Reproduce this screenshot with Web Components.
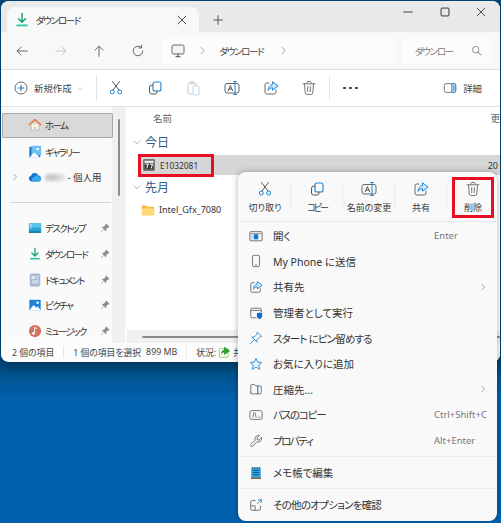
<!doctype html>
<html lang="ja"><head><meta charset="utf-8"><title>ダウンロード</title>
<style>
html,body{margin:0;height:100%;overflow:hidden}
body{width:501px;height:523px;position:relative;font:10px "Noto Sans","Noto Sans CJK JP",sans-serif;color:#3a3a3a;font-feature-settings:"palt";
background:linear-gradient(#00497f 361px,#00558f 375px,#0061ad 400px,#0062af 523px)}
</style></head><body>
<x-window>
  <x-titlebar slot="title"></x-titlebar>
  <x-navbar slot="nav"></x-navbar>
  <x-toolbar slot="tools"></x-toolbar>
  <x-sidebar slot="side">
    <x-nav-item icon="home" selected>ホーム</x-nav-item>
    <x-nav-item icon="gallery">ギャラリー</x-nav-item>
    <x-nav-item icon="cloud" chevron style="letter-spacing:0"><x-blur></x-blur> - 個人用</x-nav-item>
    <x-nav-sep></x-nav-sep>
    <x-nav-item icon="desktop" pinned>デスクトップ</x-nav-item>
    <x-nav-item icon="download" pinned>ダウンロード</x-nav-item>
    <x-nav-item icon="document" pinned>ドキュメント</x-nav-item>
    <x-nav-item icon="picture" pinned>ピクチャ</x-nav-item>
    <x-nav-item icon="music" pinned>ミュージック</x-nav-item>
  </x-sidebar>
  <x-filelist slot="files"></x-filelist>
  <x-statusbar slot="status"></x-statusbar>
</x-window>
<x-callout style="left:138px;top:154px;width:76px;height:23px"></x-callout>
<x-contextmenu>
  <x-menu-actions>
    <x-menu-action icon="cut">切り取り</x-menu-action>
    <x-menu-action icon="copy" style="letter-spacing:-2px">コピー</x-menu-action>
    <x-menu-action icon="rename">名前の変更</x-menu-action>
    <x-menu-action icon="share">共有</x-menu-action>
    <x-menu-action icon="trash" last>削除</x-menu-action>
  </x-menu-actions>
  <x-menu-item icon="open" hint="Enter">開く</x-menu-item>
  <x-menu-item icon="phone">My Phone に送信</x-menu-item>
  <x-menu-item icon="share" arrow>共有先</x-menu-item>
  <x-menu-item icon="admin">管理者として実行</x-menu-item>
  <x-menu-item icon="pin" style="--ls:-.85px">スタート にピン留めする</x-menu-item>
  <x-menu-item icon="star">お気に入りに追加</x-menu-item>
  <x-menu-item icon="zip" arrow>圧縮先...</x-menu-item>
  <x-menu-item icon="path" hint="Ctrl+Shift+C" style="--ls:-1.2px">パスのコピー</x-menu-item>
  <x-menu-item icon="wrench" hint="Alt+Enter" style="--ls:-1.5px">プロパティ</x-menu-item>
  <x-menu-sep></x-menu-sep>
  <x-menu-item icon="notepad">メモ帳で編集</x-menu-item>
  <x-menu-sep></x-menu-sep>
  <x-menu-item icon="more" style="--ls:-.75px">その他のオプションを確認</x-menu-item>
</x-contextmenu>
<x-callout style="left:452px;top:177px;width:42px;height:41px"></x-callout>
<script>
const G='#5a5a5a',B='#1c86d8';
const s=(d,c=G,w=1)=>`<path d="${d}" fill="none" stroke="${c}" stroke-width="${w}" stroke-linecap="round" stroke-linejoin="round"/>`;
const ICONS={
 download:s('M8 1.5V10M4.5 6.8 8 10.3l3.5-3.5','#16a37f',1.5)+'<rect x="2.5" y="12.5" width="11" height="1.8" fill="#2dc5a2"/>',
 back:s('M14 8H2.5M7 3.5 2.5 8 7 12.5','#555'),
 fwd:s('M2 8h11.5M9 3.5 13.5 8 9 12.5','#bdbdbd'),
 up:s('M8 14V2.5M3.5 7 8 2.5 12.5 7','#555'),
 refresh:s('M13.5 8A5.5 5.5 0 1 1 11.7 3.9M12 1.5v3H9','#555'),
 monitor:'<rect x="2" y="2" width="12" height="9" rx="1.6" fill="#f4f4f4" stroke="#666"/>'+s('M6 13.6h4M8 11v2.5','#666',1.2),
 plus:'<circle cx="8" cy="8" r="6" fill="none" stroke="#666"/>'+s('M8 5.2v5.6M5.2 8h5.6',B,1.2),
 cut:s('M5 10 11.5 1.5M11 10 4.5 1.5','#555')+`<circle cx="4.3" cy="12" r="2" fill="none" stroke="${B}"/><circle cx="11.7" cy="12" r="2" fill="none" stroke="${B}"/>`,
 copy:`<rect x="6" y="2" width="8" height="9" rx="2" fill="none" stroke="${B}" stroke-width="1.1"/>`+s('M6 5.2H4.5A2 2 0 0 0 2.5 7.2V12a2 2 0 0 0 2 2H8a2 2 0 0 0 2-2v-1','#555'),
 paste:'<rect x="3" y="3" width="8" height="11" rx="1.5" fill="none" stroke="#c9c9c9"/><rect x="5" y="1.6" width="4" height="2.4" rx=".8" fill="#eee" stroke="#c9c9c9"/><rect x="8" y="6" width="6" height="9" rx="1.2" fill="#fff" stroke="#b5d5ee"/>',
 rename:'<rect x="1" y="3.5" width="14" height="9.5" rx="2" fill="none" stroke="#666"/>'+s('M4.2 10.8 6.4 5.6l2.2 5.2M5.2 9h2.4','#555')+s('M11 1.5v13M9.6 1.5h2.8M9.6 14.5h2.8',B),
 share:s('M6 3H3.8A1.8 1.8 0 0 0 2 4.8v7.4A1.8 1.8 0 0 0 3.8 14h7.4a1.8 1.8 0 0 0 1.8-1.8V10','#666')+`<path d="M9.5 1.8 15 6l-5.5 4.2V7.8C7.5 7.8 6 8.6 5 10.5 5.2 7.5 7 4.6 9.5 4.4Z" fill="#d2e7f7" stroke="${B}" stroke-linejoin="round"/>`,
 trash:s('M2 3.8h12M6 3.6V2.5a1 1 0 0 1 1-1h2a1 1 0 0 1 1 1v1.1M3.5 3.8l.7 9a1.7 1.7 0 0 0 1.7 1.6h4.2a1.7 1.7 0 0 0 1.7-1.6l.7-9M6.7 6.6v5M9.3 6.6v5','#777'),
 details:'<rect x="1.5" y="3" width="13" height="10" rx="2" fill="none" stroke="#666"/><path d="M10 3h2.5a2 2 0 0 1 2 2v6a2 2 0 0 1-2 2H10Z" fill="#bcdcf4" stroke="#1c86d8"/>'+s('M11.8 6h1M11.8 8h1M11.8 10h1',B),
 search:'<circle cx="7" cy="7" r="4" fill="none" stroke="#777"/>'+s('M10 10l3.5 3.5','#777',1.2),
 home:'<path d="M3.5 7.5V14h9V7.5" fill="#fff3e4" stroke="#b9b3ac"/><path d="M1 8 8 1.8 15 8" fill="none" stroke="#e8763a" stroke-width="1.7" stroke-linejoin="round"/><rect x="6.5" y="10" width="3" height="4" fill="#d6d1cb"/>',
 gallery:'<rect x="1.5" y="2" width="12.5" height="12.5" rx="1" fill="#1a78c8"/><rect x="4" y="0.8" width="11" height="11" rx="1" fill="#6cc1f2"/><path d="M1.5 14.5 7 8.5l7 6Z" fill="#fff"/><circle cx="11" cy="4.5" r="1.4" fill="#fff"/>',
 cloud:'<path d="M4 13a3.2 3.2 0 0 1-.6-6.3A4.5 4.5 0 0 1 11.8 6a3.6 3.6 0 0 1 .6 7Z" fill="#0f74d1"/><path d="M6 13a2.3 2.3 0 0 1 .2-4.5 3.6 3.6 0 0 1 6.4-.8A2.8 2.8 0 0 1 13.5 13Z" fill="#36a8ee"/>',
 desktop:'<rect x="1" y="2.5" width="14" height="11" rx="1" fill="#29a3d6"/><rect x="1" y="2.5" width="14" height="5" fill="#5ec3e8"/><rect x="2.5" y="4" width="1.4" height="1.4" fill="#fff"/><rect x="2.5" y="7" width="1.4" height="1.4" fill="#fff"/><rect x="1" y="12" width="14" height="1.5" fill="#0e6f9e"/>',
 dl:s('M8 1.5V10M4.5 6.8 8 10.3l3.5-3.5','#16a37f',1.5)+'<rect x="2.5" y="12.5" width="11" height="1.8" fill="#2dc5a2"/>',
 document:'<rect x="2.5" y="1" width="11" height="14" rx="1.2" fill="#a9bdd6" stroke="#8aa0bc" stroke-width=".6"/><rect x="4.2" y="3.5" width="3.6" height="3.2" fill="#e8eef5"/><path d="M9 4h3M9 6h3M4.5 9h7.5M4.5 11h7.5" stroke="#e8eef5"/>',
 picture:'<rect x="1.5" y="2" width="13" height="12" rx="1" fill="#1e82d6"/><path d="M1.5 14 6.5 8l3 3 1.5-1.5L14.5 14Z" fill="#fff"/><circle cx="11" cy="5.4" r="1.4" fill="#fff"/>',
 music:'<circle cx="8" cy="8" r="7" fill="#d5745f"/><path d="M7.5 4v6.4" stroke="#fff" stroke-width="1"/><path d="M7.5 4l3 1.3" stroke="#fff" stroke-width="1.2"/><circle cx="6.2" cy="10.8" r="1.6" fill="#fff"/>',
 pin:s('M9.8 1.5 14.5 6.2 11.6 7.4 9 10.2 9.2 12.8 3.2 6.8 5.8 7 8.6 4.4ZM6 10 1.6 14.4',B),
 pinned:'<path d="M9.6 2.5 13.5 6.4 11.2 7.4 9 9.8 9.2 12 4 6.8 6.2 7 8.6 4.8ZM6 10 3 13" fill="#8c8c8c" stroke="#8c8c8c" stroke-linejoin="round"/>',
 archive:'<rect x="1.5" y="1.5" width="13" height="13" rx="1" fill="#555"/><rect x="2.8" y="3" width="10.4" height="10" fill="#e6e6e6"/><rect x="2.8" y="6" width="10.4" height="7" fill="#333"/><path d="M4 7.2h3l-1.6 4.6M9 7.2h3l-1.6 4.6" fill="none" stroke="#fff" stroke-width="1.2"/>',
 folder:'<path d="M1 3.8a1 1 0 0 1 1-1h4l1.4 1.4H14a1 1 0 0 1 1 1V13a1 1 0 0 1-1 1H2a1 1 0 0 1-1-1Z" fill="#f1b93f"/><rect x="1" y="6" width="14" height="8" rx="1" fill="#fcd877"/>',
 open:'<rect x="1" y="3" width="14" height="10.5" rx="1" fill="#f2f2f2" stroke="#666"/><path d="M1.5 5.2h13" stroke="#666" stroke-width=".7"/><rect x="5.5" y="6" width="5" height="5.8" fill="#0a78d4"/><rect x="2.5" y="6" width="2.4" height="5.8" fill="#bcd9f1"/>',
 phone:'<rect x="4" y="1.5" width="8" height="13" rx="1.6" fill="none" stroke="#666"/>'+s('M7 12.6h2','#666'),
 admin:s('M14 7V4a1.5 1.5 0 0 0-1.5-1.5h-9A1.5 1.5 0 0 0 2 4v8a1.5 1.5 0 0 0 1.5 1.5H8M2 5h12','#666')+'<path d="M9 8.2c1.5 0 2.3-.4 3-1 .7.6 1.5 1 3 1v3c0 2-1.4 3.3-3 3.8-1.6-.5-3-1.8-3-3.8Z" fill="#0a6fd1"/>',
 star:`<path d="M8 1.6 9.9 5.8 14.5 6.3 11.1 9.4 12 14 8 11.7 4 14 4.9 9.4 1.5 6.3 6.1 5.8Z" fill="#e8f3fc" stroke="${B}" stroke-linejoin="round"/>`,
 zip:s('M2 12.5V4a1 1 0 0 1 1-1h3.5L8 4.5h5a1 1 0 0 1 1 1v7a1 1 0 0 1-1 1H3a1 1 0 0 1-1-1Z','#666')+s('M10 4.5v9',B,1.4),
 path:'<rect x="1" y="3" width="14" height="10" rx="2" fill="none" stroke="#666"/>'+s('M5.5 5.5 4.5 10.5M7 5.5 8 10.5',B)+s('M10.5 10.5h.1M12.5 10.5h.1','#555'),
 wrench:s('M14.3 4.2 11.6 6.9 9.4 6.7 9.2 4.5 11.9 1.8A4 4 0 0 0 7 7L2 12a1.5 1.5 0 0 0 2.1 2.1L9.1 9a4 4 0 0 0 5.2-4.8Z','#666'),
 notepad:'<rect x="2.5" y="2" width="11" height="12.5" fill="#33a9e0"/><path d="M2.5 14h11" stroke="#8a5a2b" stroke-width="1.6"/><path d="M4.5 5h7M4.5 7.5h7M4.5 10h7" stroke="#0a4f75"/><path d="M4 1.2v2M6 1.2v2M8 1.2v2M10 1.2v2M12 1.2v2" stroke="#2b5d7d"/>',
 more:s('M7 3H3.5A1.5 1.5 0 0 0 2 4.5v8A1.5 1.5 0 0 0 3.5 14h8a1.5 1.5 0 0 0 1.5-1.5V9M2 9h5v5','#666')+s('M9.5 6.5 14 2M10.8 2H14v3.2',B),
 stshare:'<rect x="1.5" y="3" width="11" height="11" rx="1.5" fill="none" stroke="#7ccf5a"/><path d="M7.5 1 15 6l-7.5 5V8C5.5 8 4.5 9 3.5 11 3.5 7.5 5 5 7.5 4.5Z" fill="#2f9e2f"/>',
 chev:s('M6 3.5 10.5 8 6 12.5','#777'),
 chevd:s('M3 6l5 5 5-5','#7f8b97'),
 min:s('M3 8h10','#333'),
 max:'<rect x="3.5" y="3.5" width="9" height="9" rx="1" fill="none" stroke="#333" stroke-width="1.1"/>',
 close:s('M3.5 3.5l9 9M12.5 3.5l-9 9','#333'),
 add:s('M8 3v10M3 8h10','#444')
};
const svg=(n,sz=16)=>`<svg part="i" width="${sz}" height="${sz}" viewBox="0 0 16 16" style="flex:none;display:block">${ICONS[n]}</svg>`;
function def(name,css,html){
  customElements.define(name,class extends HTMLElement{
    constructor(){super();this.attachShadow({mode:'open'})}
    connectedCallback(){const h=typeof html==='function'?html(this):html;
      this.shadowRoot.innerHTML=`<style>${css}</style>${h}`;}
  });
}
const ibtn=`.b{width:38.6px;height:100%;display:flex;align-items:center;justify-content:center;flex:none}`;
const KANA='font-size:9.5px;letter-spacing:-1.3px';
def('x-window',`:host{display:grid;grid-template-columns:126px 1fr;grid-template-rows:31px 38px 37px 236px 18px;
  width:499px;height:361px;margin:1px 0 0 1px;background:#fbfbfb;border-radius:8px;overflow:hidden;box-shadow:0 4px 14px rgba(0,0,0,.35)}
  ::slotted([slot=title]),::slotted([slot=nav]),::slotted([slot=tools]),::slotted([slot=status]){grid-column:1/3}`,
  `<slot name="title"></slot><slot name="nav"></slot><slot name="tools"></slot><slot name="side"></slot><slot name="files"></slot><slot name="status"></slot>`);
def('x-titlebar',`:host{display:flex;background:#e9e9e9;padding-top:6px;box-sizing:border-box;padding-left:6px;color:#333}
 .tab{width:192px;background:#f8f8f8;border-radius:8px 8px 0 0;display:flex;align-items:center;padding:0 10px 0 7px;box-sizing:border-box;gap:6px}
 .t{flex:1;${KANA}}.add{width:37px;display:flex;align-items:center;justify-content:center}
 .sp{flex:1}.w{width:36.5px;display:flex;align-items:flex-start;justify-content:center;padding-top:4px;margin-top:-6px;height:24px}`,
 `<div class="tab">${svg('download')}<span class="t">ダウンロード</span>${svg('close',14)}</div><div class="add">${svg('add',14)}</div><div class="sp"></div>
  <div class="w">${svg('min',14)}</div><div class="w">${svg('max',14)}</div><div class="w" style="margin-right:.5px">${svg('close',14)}</div>`);
def('x-navbar',`:host{display:flex;align-items:center;background:#f8f8f8;border-bottom:1px solid #dcdcdc;box-sizing:border-box;padding:0 9px 0 2px;color:#444}
 ${ibtn} .a{flex:1;height:26px;margin-left:5px;background:#fcfcfc;border-radius:4px;display:flex;align-items:center;padding-left:8px;gap:11px}
 .k{${KANA};width:48px}.s{width:89px;height:26px;margin-left:6px;background:#fcfcfc;border-radius:4px;display:flex;align-items:center;padding:0 8px 0 13px;box-sizing:border-box;justify-content:space-between;color:#777}`,
 `<div class="b">${svg('back',14)}</div><div class="b">${svg('fwd',14)}</div><div class="b">${svg('up',14)}</div><div class="b">${svg('refresh',14)}</div>
 <div class="a">${svg('monitor')}${svg('chev',11)}<span class="k">ダウンロード</span>${svg('chev',11)}</div>
 <div class="s"><span class="k" style="width:auto">ダウンロー</span>${svg('search',13)}</div>`);
def('x-toolbar',`:host{display:flex;align-items:center;background:#fff;border-bottom:1px solid #e2e2e2;box-sizing:border-box;padding-left:12px;color:#444}
 ${ibtn} .n{display:flex;align-items:center;gap:5px;width:83px;flex:none;font-size:9.4px}
 .sep{width:1px;height:26px;background:#e6e6e6;flex:none}.d{display:flex;gap:3.5px;width:42px;justify-content:center;flex:none}
 .d i{width:2.4px;height:2.4px;border-radius:50%;background:#333}.sp{flex:1}.det{display:flex;align-items:center;gap:6px;padding-right:18px;font-size:9.4px}`,
 `<div class="n">${svg('plus')}<span>新規作成</span>${svg('chevd',7)}</div><div class="sep"></div>
 <div class="b">${svg('cut')}</div><div class="b">${svg('copy')}</div><div class="b">${svg('paste')}</div><div class="b">${svg('rename')}</div><div class="b">${svg('share')}</div><div class="b">${svg('trash')}</div>
 <div class="sep"></div><div class="d"><i></i><i></i><i></i></div><div class="sp"></div><div class="det">${svg('details',14)}<span>詳細</span></div>`);
def('x-sidebar',`:host{display:flex;flex-direction:column;padding:6.2px 14px 0 1px;box-sizing:border-box;position:relative;background:linear-gradient(90deg,#fafafa 111px,#f0f0f0 111px,#f0f0f0 124px,#fbfbfb 124px);overflow:hidden}
 .th{position:absolute;left:117px;top:12px;width:2px;height:77px;background:#8c8c8c;border-radius:1px}`,
 `<slot></slot><div class="th"></div>`);
def('x-nav-item',`:host{display:flex;align-items:center;height:25.6px;flex:none;position:relative;color:#333;font-size:9.5px;letter-spacing:-1.6px;box-sizing:border-box;padding-left:26px;gap:3px;white-space:nowrap}
 :host([selected]){background:#d9d9d9;box-shadow:inset 0 0 0 1px #a9a9a9;border-radius:2px;height:24.6px;margin-bottom:1px}
 .ch{position:absolute;left:8px}.pin{position:absolute;right:2px}`,
 h=>`${h.hasAttribute('chevron')?`<span class="ch">${svg('chev',10)}</span>`:''}${svg(h.getAttribute('icon')==='download'?'dl':h.getAttribute('icon'),14)}<span><slot></slot></span>${h.hasAttribute('pinned')?`<span class="pin">${svg('pinned',12)}</span>`:''}`);
def('x-nav-sep',`:host{display:flex;align-items:center;height:25.6px;flex:none;padding:0 2px 0 8px}div{height:1px;flex:1;background:#d4d4d4}`,`<div></div>`);
def('x-blur',`:host{display:inline-block;width:20px;height:9px;vertical-align:-1px;background:radial-gradient(ellipse at 35% 50%,#bdbdbd,#e8e8e8 70%,transparent);filter:blur(1px)}`,``);
def('x-filelist',`:host{display:flex;flex-direction:column;background:#fff;position:relative;overflow:hidden;color:#333}
 .h{height:22px;display:flex;align-items:center;padding-left:26px;justify-content:space-between;color:#666;flex:none;font-size:9.5px}
 .g{height:24px;display:flex;align-items:center;gap:3px;font-size:12px;color:#2f5c88;padding-left:5px;flex:none}
 .r{height:20px;display:flex;align-items:center;gap:4px;padding-left:14px;flex:none;position:relative;font-size:9px}
 .sel{background:#d6d6d6;margin-left:12px;padding-left:3px;font-size:8.4px}
 .date{position:absolute;right:2px;font-size:9px}
 .sb{margin-top:auto;height:13px;background:#f0f0f0;display:flex;align-items:center;padding-left:15px;flex:none}.sb i{display:block;width:100%;height:2px;background:#8c8c8c;border-radius:1px}`,
 `<div class="h"><span>名前</span><span>更</span></div>
 <div class="g" style="height:26px">${svg('chevd',10)}<span>今日</span></div>
 <div class="r sel">${svg('archive',14)}<span>E1032081</span><span class="date">20</span></div>
 <div class="g">${svg('chevd',10)}<span>先月</span></div>
 <div class="r" style="height:21px">${svg('folder',14)}<span>Intel_Gfx_7080</span></div>
 <div class="sb"><i></i></div>`);
def('x-statusbar',`:host{display:flex;align-items:center;background:#fcfcfc;padding-left:11px;color:#444;overflow:hidden;white-space:nowrap;font-size:8.8px}
 .s{width:1px;height:12px;background:#e8e8e8;margin:0 9px;flex:none}.u{margin-left:5px}.i{margin:0 2px 0 2px}`,
 `<span>2 個の項目</span><span class="s"></span><span>1 個の項目を選択</span><span class="u">899 MB</span><span class="s"></span><span>状況:</span><span class="i">${svg('stshare',13)}</span><span>共有</span>`);
def('x-callout',`:host{display:block;position:absolute;box-sizing:border-box;border:3px solid #e60f23;pointer-events:none}`,``);
def('x-contextmenu',`:host{position:absolute;left:238px;top:172px;width:259px;height:349px;background:#f9f9f9;border-radius:8px;box-shadow:0 0 6px rgba(0,0,0,.3);display:flex;flex-direction:column;box-sizing:border-box;padding-bottom:3px;font-size:10.5px;color:#333}`,`<slot></slot>`);
def('x-menu-actions',`:host{display:flex;height:50px;flex:none;padding:0 0 0 1px;border-bottom:1px solid #e8e8e8;box-sizing:border-box;margin-bottom:1px}`,`<slot></slot>`);
def('x-menu-action',`:host{width:52px;flex:none;display:flex;flex-direction:column;align-items:center;padding-top:9px;box-sizing:border-box;gap:4px;font-size:9px;position:relative;white-space:nowrap;color:#3a3a3a}
 .sep{position:absolute;right:0;top:10px;height:28px;width:1px;background:#ececec}`,
 h=>`${svg(h.getAttribute('icon'),16)}<span><slot></slot></span>${h.hasAttribute('last')?'':'<i class="sep"></i>'}`);
def('x-menu-item',`:host{display:flex;align-items:center;height:25.6px;flex:none;padding-left:11px;gap:10px;position:relative;white-space:nowrap}
 .t{letter-spacing:var(--ls,0)}.h{position:absolute;left:196px;font-size:9.5px;color:#777;letter-spacing:0}.a{position:absolute;left:240px}`,
 h=>`${svg(h.getAttribute('icon'),14)}<span class="t"><slot></slot></span>${h.getAttribute('hint')?`<span class="h">${h.getAttribute('hint')}</span>`:''}${h.hasAttribute('arrow')?`<span class="a">${svg('chev',10)}</span>`:''}`);
def('x-menu-sep',`:host{display:flex;align-items:center;height:6.4px;flex:none}div{height:1px;flex:1;background:#ececec;margin:0 0 0 3px}`,`<div></div>`);
</script>
</body></html>
